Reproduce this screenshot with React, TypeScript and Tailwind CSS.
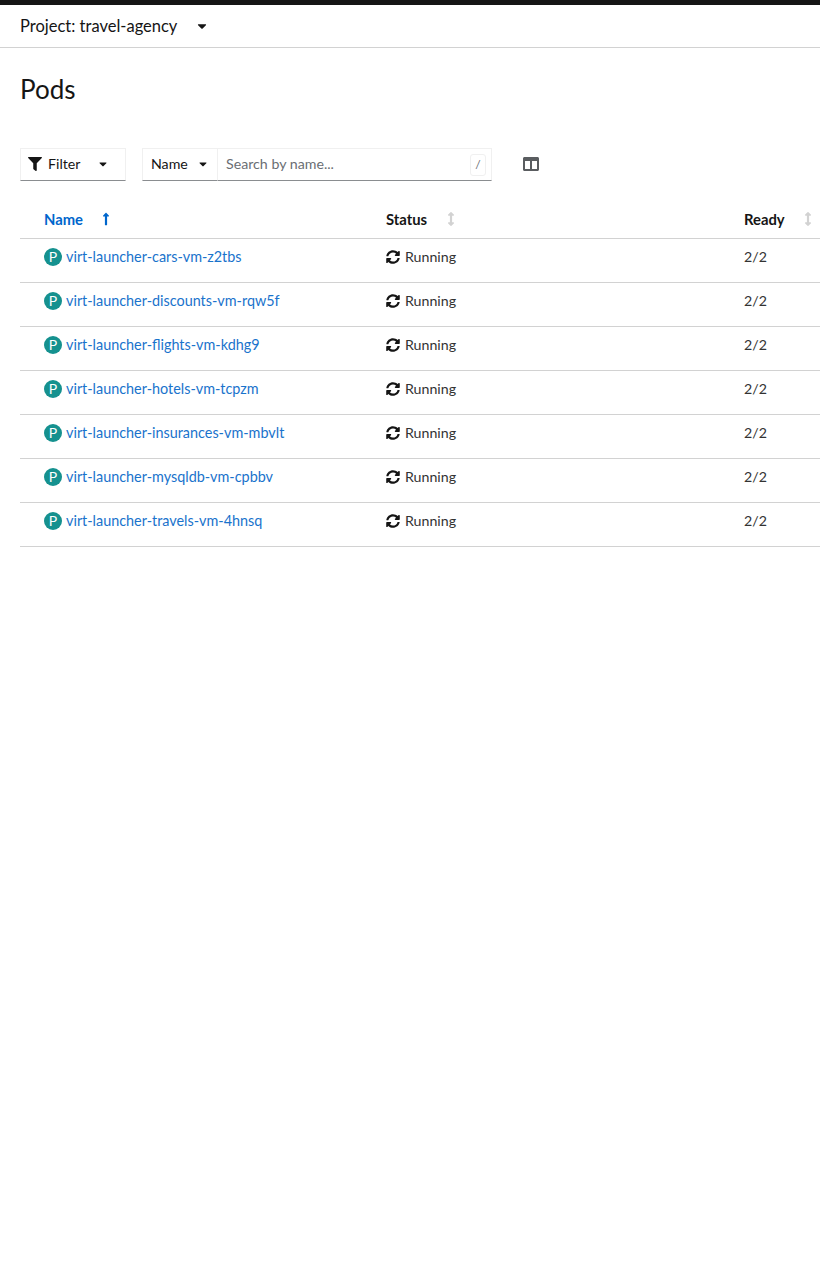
import { FaArrowsAltV, FaCaretDown, FaColumns, FaFilter, FaLongArrowAltUp, FaSyncAlt } from 'react-icons/fa';

const pods = [
    'virt-launcher-cars-vm-z2tbs',
    'virt-launcher-discounts-vm-rqw5f',
    'virt-launcher-flights-vm-kdhg9',
    'virt-launcher-hotels-vm-tcpzm',
    'virt-launcher-insurances-vm-mbvlt',
    'virt-launcher-mysqldb-vm-cpbbv',
    'virt-launcher-travels-vm-4hnsq',
];

export default function App() {
    return (
        <div className="min-h-[1261px] bg-white font-['Lato',sans-serif] text-[#151515] overflow-hidden">
            <div className="h-[5px] bg-[#151515]" />
            <div className="h-[42px] border-b border-[#d2d2d2] box-content flex items-center px-5">
                <span className="text-[16.5px] text-[#151515]">Project: travel-agency</span>
                <FaCaretDown className="ml-[18px] text-[14px] text-[#151515]" />
            </div>

            <h1 className="mt-[24px] px-5 text-[26px] leading-[34px] font-normal text-[#151515]">Pods</h1>

            <div className="mt-[42px] px-5 flex items-center h-[33px]">
                <div className="w-[106px] h-[33px] pb-px flex items-center border border-[#f0f0f0] border-b-[#8a8d90] pl-[7px]">
                    <FaFilter className="text-[14px]" />
                    <span className="ml-[6px] text-[14.2px]">Filter</span>
                    <FaCaretDown className="ml-[17px] text-[12px]" />
                </div>
                <div className="ml-4 w-[76px] h-[33px] pb-px flex items-center border border-[#f0f0f0] border-b-[#8a8d90] pl-2">
                    <span className="text-[14.2px]">Name</span>
                    <FaCaretDown className="ml-[9px] text-[12px]" />
                </div>
                <div className="w-[274px] h-[33px] flex items-center justify-between border border-l-0 border-[#f0f0f0] border-b-[#8a8d90] pl-2 pr-[5px]">
                    <span className="pb-px text-[14.2px] text-[#6a6e73]">Search by name...</span>
                    <span className="w-4 h-[22px] flex items-center justify-center border border-[#f0f0f0] rounded-[3px] text-[12px] text-[#6a6e73]">/</span>
                </div>
                <div className="ml-[31px] pb-0.5">
                    <FaColumns className="text-[16px] text-[#5a5d60]" />
                </div>
            </div>

            <div className="ml-5 mt-[19px]">
                <div className="h-[39px] grid grid-cols-[366px_358px_1fr] items-center border-b border-[#d2d2d2] text-[14.8px] font-bold">
                    <div className="pl-6 flex items-center text-[#0066cc]">
                        <span>Name</span>
                        <FaLongArrowAltUp className="ml-[16px] text-[14px]" />
                    </div>
                    <div className="flex items-center">
                        <span>Status</span>
                        <FaArrowsAltV className="ml-[17px] text-[14px] text-[#d2d2d2]" />
                    </div>
                    <div className="flex items-center">
                        <span>Ready</span>
                        <FaArrowsAltV className="ml-[16px] text-[14px] text-[#d2d2d2]" />
                    </div>
                </div>
                {pods.map((pod) => (
                    <div key={pod} className="h-11 pb-[7px] grid grid-cols-[366px_358px_1fr] items-center border-b border-[#d2d2d2] text-[14.2px]">
                        <div className="pl-6 flex items-center">
                            <span className="w-[18px] h-[18px] rounded-full bg-[#15918f] text-white text-[14px] flex items-center justify-center">P</span>
                            <a className="ml-1 text-[14.4px] text-[#1a73cc]">{pod}</a>
                        </div>
                        <div className="flex items-center">
                            <FaSyncAlt className="text-[14px]" />
                            <span className="ml-[5px] text-[#333]">Running</span>
                        </div>
                        <div className="text-[#333]">2/2</div>
                    </div>
                ))}
            </div>
        </div>
    );
}
